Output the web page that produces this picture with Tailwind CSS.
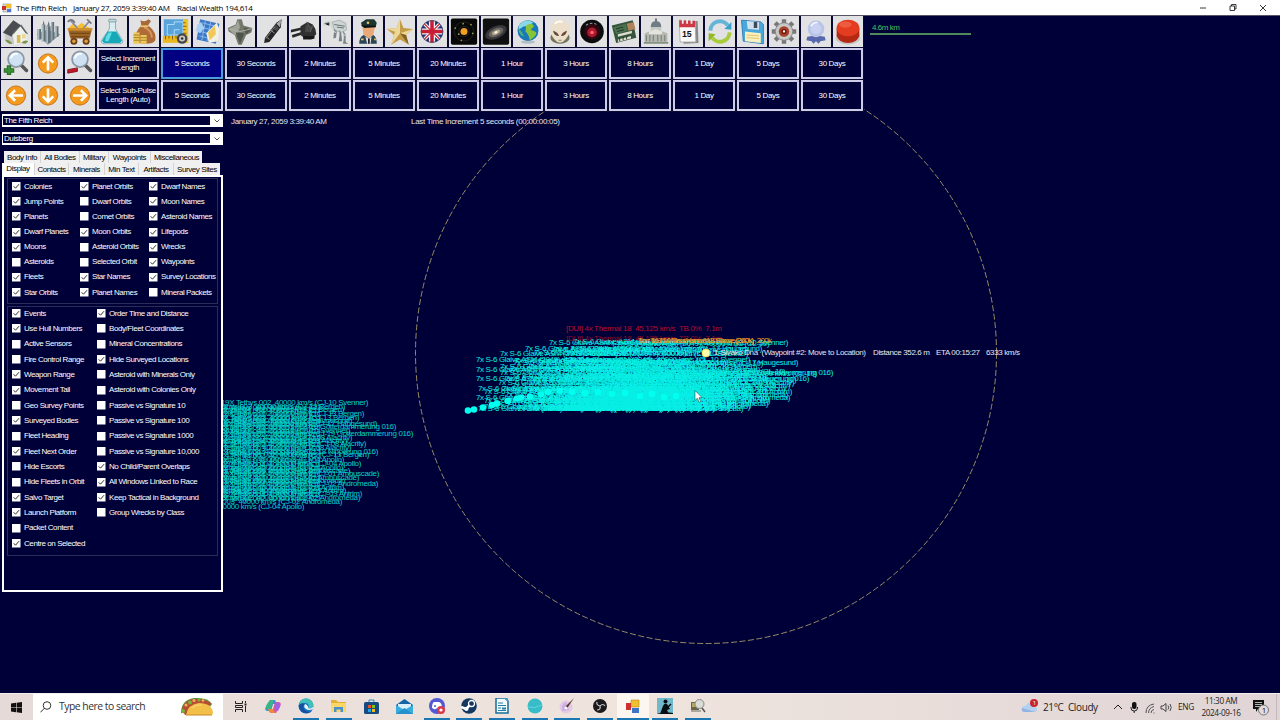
<!DOCTYPE html>
<html lang="en">
<head>
  <meta charset="UTF-8" />
  <meta name="viewport" content="width=device-width, initial-scale=1.0" />
  <title>The Fifth Reich</title>
  <script src="https://cdn.jsdelivr.net/npm/@tailwindcss/browser@4"></script>
</head>
<body class="w-[1280px] h-[720px] overflow-hidden bg-[#000038] font-['Liberation_Sans',sans-serif]">
<div class="relative flex flex-col w-[1280px] h-[720px]">

  <!-- Title bar -->
  <header class="flex items-center h-[16px] shrink-0 bg-white border-b border-[#55556a] pl-[2px] text-[8px] text-black font-['Open_Sans',sans-serif] whitespace-pre">
    <svg class="w-[10px] h-[10px] mr-[4px]" viewBox="0 0 10 10"><rect x="1" y="1" width="8" height="8" fill="#ddd" stroke="#888" stroke-width=".6"/><rect x="4" y="1" width="5" height="4" fill="#f0c030"/><rect x="0" y="3" width="4" height="4" fill="#c8302c"/><rect x="5" y="6" width="4" height="3" fill="#4a7ad0"/></svg>
    <span class="w-[57px] tracking-[-0.25px]">The Fifth Reich</span>
    <span class="w-[104px] tracking-[-0.32px]">January 27, 2059 3:39:40 AM</span>
    <span class="tracking-[-0.28px]">Racial Wealth 194,614</span>
    <svg class="ml-auto w-[80px] h-[14px]" viewBox="0 0 80 14" fill="none" stroke="#222" stroke-width=".9"><path d="M0 7h6M30 5h4.500v4.500H30zM31.500 5V3.500H36V8H34.500M60 4l6 6M66 4l-6 6"/></svg>
  </header>

  <!-- System map -->
  <svg class="absolute left-0 top-[16px]" width="1280" height="677" viewBox="0 16 1280 677" font-family="Liberation Sans, sans-serif" font-size="8">
    <circle cx="706" cy="353" r="290.500" fill="none" stroke="#a89a68" stroke-width=".9" stroke-dasharray="6 2.500"/>
    <g id="tethys" fill="#00d4cc"></g>
    <g id="missiles" fill="#08f0e6"></g>
    <g id="contacts"></g>
    <g id="dots" fill="#00ffee"></g>
    <g id="labels"></g>
    <circle cx="706" cy="353" r="4" fill="#ffffb0" stroke="#e8d040" stroke-width=".8"/>
    <rect x="870" y="33" width="101" height="2" fill="#4f8a5a"/>
    <path d="M695 390.500v10l2.300-2.200 1.800 4 1.600-.7-1.800-3.900h3.200z" fill="#fff" stroke="#222" stroke-width=".5"/>
  </svg>

  <!-- Toolbar -->
  <div class="relative w-[864px] shrink-0 bg-[#0a0a30]">
    <div id="iconbar" class="grid grid-cols-27 h-[32px] *:w-[30px] *:h-[31px] *:ml-px *:bg-[#e2e2e4] *:p-px">
      <svg viewBox="0 0 32 32"><path d="M2 17L12 4l15 12-1 12-13 2-9-6z" fill="#c8c8c8"/><path d="M12 16l8-7 8 9v9l-14 4z" fill="#f0f0ec"/><path d="M1 17L13 3l9 6-9 8-2 5z" fill="#4a4e52"/><path d="M22 8l8 11-3-1-6-8-8 9-1-2z" fill="#606468"/><rect x="17" y="20" width="4" height="9" fill="#d8b850"/><rect x="23" y="19" width="4" height="5" fill="#e8d890"/><path d="M3 25q6 0 9 5-5 1-9-5M22 29q4-4 8-2l-3 3z" fill="#78944c"/></svg>
      <svg viewBox="0 0 32 32"><path d="M3 19l12-5 15 5-14 12z" fill="#8a979c"/><path d="M4 13h4v12H4zM9 8h4v19H9zM14 10h5v19h-5zM20 5h3v20h-3zM24 10h4v12h-4z" fill="#60717a"/><path d="M4 13h2v12H4zM9 8h2v19H9zM14 10h2v19h-2zM20 5h1v20h-1zM24 10h2v12h-2z" fill="#aebdc2"/><path d="M15 10l2-6 1 6M10 8l1-5 1 5" fill="#60717a"/></svg>
      <svg viewBox="0 0 32 32"><path d="M3 12l5-5 5 3 5-4 5 4 5 2z" fill="#f4c02c"/><path d="M5 3l8 9M27 4l-7 8" stroke="#8888a8" stroke-width="2"/><path d="M2 5q5-5 8 1M24 2l5 5" stroke="#777" stroke-width="2" fill="none"/><path d="M2 12h28l-3 12H5z" fill="#9c6424"/><path d="M2 12h28v3H2z" fill="#d09030"/><path d="M5 18h22M6 22h20" stroke="#623c14"/><circle cx="9" cy="27" r="4" fill="#6c4014"/><circle cx="23" cy="27" r="4" fill="#6c4014"/><circle cx="9" cy="27" r="2" fill="#e0a040"/><circle cx="23" cy="27" r="2" fill="#e0a040"/></svg>
      <svg viewBox="0 0 32 32"><path d="M13 3h7v10l8 13q1 4-3 4H7q-4 0-3-4l9-13z" fill="#d8eef0" stroke="#80a8b0"/><path d="M11 16h10l6 10q0 3-3 3H8q-3 0-3-3z" fill="#16a8b8"/><path d="M9 22l3-5h4l-4 10H8z" fill="#60dce4"/><rect x="12" y="2" width="9" height="3" rx="1.500" fill="#c8dce0" stroke="#7898a0"/></svg>
      <svg viewBox="0 0 32 32"><path d="M12 3q5 3 9-1l3 2-4 6h-7z" fill="#a86838"/><path d="M13 9h8q10 8 8 17-2 4-11 4-12 0-12-6 0-8 7-15z" fill="#b06c38"/><path d="M16 11q9 4 9 12" stroke="#d89860" stroke-width="2" fill="none"/><path d="M12 10h9" stroke="#ecc868" stroke-width="2"/><path d="M4 17h7v13H4zM12 20h7v10h-7z" fill="#ecc858"/><path d="M4 20h7M4 23h7M4 26h7M12 23h7M12 26h7" stroke="#a07820"/></svg>
      <svg viewBox="0 0 32 32"><path d="M2 2h27v21H2z" fill="#5aa4dc"/><path d="M6 20V8h8V5h10v15z" fill="none" stroke="#b8e0fa"/><path d="M14 20v-6h6" stroke="#b8e0fa" fill="none"/><path d="M1 21h28v8H1z" fill="#ecb820"/><path d="M24 2h6v27h-6z" fill="#f0c428"/><path d="M4 21v4M8 21v3M12 21v4M16 21v3M24 6h3M24 10h4M24 14h3M24 18h4" stroke="#6c5410"/><circle cx="23" cy="24" r="6" fill="#444"/><circle cx="23" cy="24" r="3.500" fill="#c8c8c8"/><circle cx="23" cy="24" r="1.500" fill="#333"/></svg>
      <svg viewBox="0 0 32 32"><path d="M7 2l22 5-4 23-22-5z" fill="#3c78c8"/><path d="M9 6l16 4M8 11l16 4M7 16l16 4M6 21l16 4M13 4L9 26M19 5l-4 22" stroke="#90bcec"/><path d="M4 8l4-3 4 7-5 6-5-3z" fill="#a8d0f4"/><path d="M14 18L26 6l3 7-2 14-10 2z" fill="#f2f0e4"/><path d="M16 17l8-8 1 10-7 7z" fill="#f0c858"/></svg>
      <svg viewBox="0 0 32 32"><path d="M13 2h5l2 7 10 3-1 5-6 3-5 11h-4l-4-11-7-4-1-4 9-4z" fill="#74786c"/><path d="M14 3l2 8-4 9-3-1-6-6 8-4z" fill="#a0a498"/><path d="M20 11l9 3-6 5zM11 17l10 1-5 12z" fill="#50544c"/><path d="M3 13l13 3 13-3" stroke="#b0b4a8" fill="none"/></svg>
      <svg viewBox="0 0 32 32"><path d="M27 2l-1 9-13 17-6 1 1-6L21 6z" fill="#242424"/><path d="M27 2l-6 5 4 4z" fill="#a8a8a8"/><path d="M20 8l4 4-3 4-4-4z" fill="#484848"/><path d="M9 22l4 3M14 14l5 4" stroke="#a0a0a0"/><path d="M19 11L9 24" stroke="#888"/></svg>
      <svg viewBox="0 0 32 32"><path d="M1 14l13-3v3L1 17zM2 20l13-4v3L3 23z" fill="#282828"/><path d="M12 10l8-5 6 3 3 5 1 6-3 3-10 2-5-4z" fill="#303030"/><path d="M18 8l7 2-1 6-7 1z" fill="#484848"/><path d="M15 21h13v3l-4 1h-9z" fill="#181818"/><path d="M19 5l3 5M26 9l-3 8" stroke="#666"/></svg>
      <svg viewBox="0 0 32 32"><path d="M1 5l7-2 5 2 8-3 7 3 1 8-5 5-12-3-3-6-7 1z" fill="#d4d8d8"/><path d="M12 5l8-2 7 4 1 7-6 3-8-3z" fill="#ccd4d4" stroke="#8c9494" stroke-width=".6"/><path d="M14 13l3 3-1 7-3 1zM24 15l3 4v9l3 2h-6l1-7zM20 14l2 4 1 9h-4l1-7z" fill="#788484"/><path d="M3 7l5-1v3M14 8l12 2M17 11l8 1" stroke="#5c6464"/><path d="M13 16l3 1M24 20h3" stroke="#eee"/></svg>
      <svg viewBox="0 0 32 32"><path d="M9 7h16l-2 8-1 5-5 4-6-4-1-6z" fill="#e8a878"/><path d="M8 6l6-4h9l3 4-1 4H9z" fill="#1e3430"/><path d="M8 9h17v2l-13 1z" fill="#0c1414"/><circle cx="16" cy="6" r="1.500" fill="#e8c860"/><path d="M6 30q0-8 5-10l6 4 5-4q4 2 4 10z" fill="#2a4454"/><path d="M13 22l4 2 3-2-1 8h-4z" fill="#ddd"/><path d="M16 24h2v6h-2z" fill="#222"/><path d="M8 25h3M23 25h2" stroke="#e8c060" stroke-width="2"/></svg>
      <svg viewBox="0 0 32 32"><path d="M16 2l4 10 11 1-8 7 3 11-10-6-10 6 3-11-8-7 11-1z" fill="#c49c48"/><path d="M16 2v16l-10 13 3-11zM16 18L1 13l11-1zM16 18l15-5-8 7z" fill="#ecd898"/><path d="M16 18l10 13-3-11z" fill="#806024"/></svg>
      <svg viewBox="0 0 32 32"><circle cx="16" cy="16" r="12.500" fill="#24346c"/><path d="M7 7l18 18M25 7L7 25" stroke="#f0f0f4" stroke-width="4"/><path d="M16 3.500v25M3.500 16h25" stroke="#f0f0f4" stroke-width="7"/><path d="M7 7l18 18M25 7L7 25" stroke="#c82034" stroke-width="1.500"/><path d="M16 3.500v25M3.500 16h25" stroke="#c81c34" stroke-width="4"/><circle cx="16" cy="16" r="12.500" fill="none" stroke="#40466c"/></svg>
      <svg viewBox="0 0 32 32"><rect x="1" y="1" width="30" height="30" rx="2" fill="#080808"/><g fill="none" stroke="#242420"><circle cx="16" cy="16" r="6"/><circle cx="16" cy="16" r="11"/></g><circle cx="16" cy="16" r="4" fill="#f0a020"/><g fill="#90a050"><circle cx="6" cy="12" r="1"/><circle cx="24" cy="8" r="1"/><circle cx="26" cy="18" r="1"/><circle cx="13" cy="26" r="1"/><circle cx="10" cy="19" r="1"/><circle cx="15" cy="7" r="1"/></g></svg>
      <svg viewBox="0 0 32 32"><rect x="1" y="1" width="30" height="30" rx="2" fill="#101012"/><g transform="rotate(-24 16 17)"><ellipse cx="16" cy="17" rx="13" ry="7" fill="#38383c"/><ellipse cx="16" cy="17" rx="9" ry="4.500" fill="#69655f"/><ellipse cx="16" cy="17" rx="5" ry="2.500" fill="#b0a490"/><ellipse cx="16" cy="17" rx="2" ry="1.300" fill="#fff0d8"/></g></svg>
      <svg viewBox="0 0 32 32"><circle cx="16" cy="15" r="12" fill="#1878b8"/><path d="M8 6q8-5 14 0-7 5-11 4-4 4-6 3 0-4 3-7z" fill="#88d8e8"/><path d="M14 9q6-4 9 1l-4 4 5 2q4 2-2 7l-4 3q-1-7-5-10z" fill="#88c438"/><path d="M5 12q5 5 7 10-7-2-7-10z" fill="#48b084"/><ellipse cx="16" cy="28" rx="8" ry="2" fill="#889cac" opacity=".5"/></svg>
      <svg viewBox="0 0 32 32"><ellipse cx="16" cy="23" rx="11" ry="7" fill="#74745c"/><path d="M5 13q0-11 11-11t11 11q0 8-7 14-4 3-8 0-7-6-7-14z" fill="#ece0cc"/><path d="M8 15q5 1 7 6-6 0-7-6zM24 15q-5 1-7 6 6 0 7-6z" fill="#684c38"/><path d="M10 7q4-4 9-2" stroke="#fff" stroke-width="2" fill="none"/><path d="M14 26h4" stroke="#907860"/></svg>
      <svg viewBox="0 0 32 32"><circle cx="16" cy="16" r="13.500" fill="#0c0c0e"/><circle cx="16" cy="16" r="9" fill="#300810"/><circle cx="16" cy="17" r="5.500" fill="#b01830"/><circle cx="16" cy="17" r="2" fill="#ff6870"/><path d="M9 9q7-5 14 0" stroke="#999" stroke-width="1.200" stroke-dasharray="3 2" fill="none"/></svg>
      <svg viewBox="0 0 32 32"><path d="M2 9l24-6 4 20-23 6z" fill="#34543c"/><path d="M4 11l14-4 2 8-13 4z" fill="#4c7050"/><path d="M19 7l8-2 2 8-8 2z" fill="#b08458"/><path d="M9 19l16-4v3L9 22zM9 25l15-4v3L9 28z" fill="#dcdccc"/><path d="M7 13l8-2M8 16l8-2M11 23v4M15 22v4M19 21v4" stroke="#1c3020"/></svg>
      <svg viewBox="0 0 32 32"><path d="M15 1h2v4h-2z" fill="#666"/><path d="M10 11q0-7 6-7t6 7z" fill="#707c84"/><path d="M10 11h12v5H10z" fill="#c4c8c4"/><path d="M3 18l13-5 13 5v10H3z" fill="#b4b8b0"/><path d="M8 16l8-3 7 3v3H8z" fill="#e4e4dc"/><path d="M5 20v7M9 20v7M13 20v7M18 20v7M22 20v7M26 20v7" stroke="#7c847c" stroke-width="1.300"/><path d="M2 28h28v2H2z" fill="#849080"/></svg>
      <svg viewBox="0 0 32 32"><path d="M8 4h19l1 25-17 1z" fill="#888"/><path d="M6 3l18 1 1 24H7z" fill="#fafafa" stroke="#aaa"/><path d="M6 3l18 1v7H6z" fill="#cc3844"/><path d="M10 2v5M15 2v5M20 2v5" stroke="#eee" stroke-width="2"/><text x="9" y="22" font-family="Liberation Sans, sans-serif" font-weight="bold" font-size="10" fill="#111">15</text></svg>
      <svg viewBox="0 0 32 32" fill="none" stroke-width="4.500"><path d="M5 15A11 11 0 0 1 25 9" stroke="#64b4d8"/><path d="M27 17A11 11 0 0 1 7 23" stroke="#a8cc3c"/><path d="M21 13l8 1V5z" fill="#3ca0cc"/><path d="M11 19l-8-1v9z" fill="#90b824"/></svg>
      <svg viewBox="0 0 32 32"><path d="M4 3l22 2 3 3v22l-23-3z" fill="#48a8dc" stroke="#2878b4"/><path d="M10 4l14 1v9l-13-1z" fill="#d4e0ec"/><path d="M18 5h4v7h-4z" fill="#3c4c5c"/><path d="M8 16l18 2v11L8 27z" fill="#f8f0c0"/><path d="M10 20l14 1M10 23l14 1" stroke="#e0c060"/></svg>
      <svg viewBox="0 0 32 32"><g stroke="#787878" stroke-width="5"><path d="M16 2v28M2 16h28M6 6l20 20M26 6L6 26"/></g><circle cx="16" cy="16" r="10" fill="#c8c8c8" stroke="#848484"/><circle cx="16" cy="16" r="6" fill="#a84028"/><circle cx="16" cy="16" r="3" fill="#6c1810"/><circle cx="16" cy="16" r="1.300" fill="#fff"/></svg>
      <svg viewBox="0 0 32 32"><path d="M6 22l5-1h10l5 1 1 4-6 1-2 3-3-3-3 3-2-3-6-1z" fill="#5868ac"/><circle cx="16" cy="13" r="9.500" fill="#b8c4e8"/><circle cx="16" cy="13" r="6" fill="#c8d2f0"/><path d="M10 10q3-5 8-4" stroke="#eef2ff" stroke-width="2" fill="none"/></svg>
      <svg viewBox="0 0 32 32"><ellipse cx="16" cy="23" rx="14" ry="8" fill="#c8c8c8"/><path d="M3 12v9q3 8 13 8t13-8v-9z" fill="#b42814"/><ellipse cx="16" cy="12" rx="13" ry="9.500" fill="#e43c20"/><ellipse cx="13" cy="8" rx="7" ry="3.500" fill="#ee5c40"/></svg>
    </div>

    <div class="grid grid-cols-[32px_32px_32px_1fr] h-[64px] grid-rows-2">
      <svg class="w-[30px] h-[31px] ml-px p-px bg-[#e2e2e4]" viewBox="0 0 32 32"><path d="M22 18l6 6" stroke="#555" stroke-width="4" stroke-linecap="round"/><circle cx="16" cy="11" r="9" fill="#cfe2f4" stroke="#8c98a8" stroke-width="2"/><path d="M10 10q2-6 8-5" stroke="#fff" stroke-width="2" fill="none"/><path d="M8 18v11M2 24h12" stroke="#286c28" stroke-width="5"/><path d="M8 19v9M3 24h10" stroke="#389034" stroke-width="3"/></svg>
      <svg class="w-[30px] h-[31px] ml-px p-px bg-[#e2e2e4]" viewBox="0 0 32 32"><circle cx="16" cy="16" r="11" fill="#f49a1c" stroke="#c06c10"/><path d="M16 9v15M10 15l6-6 6 6" stroke="#fff" stroke-width="3" fill="none"/></svg>
      <svg class="w-[30px] h-[31px] ml-px p-px bg-[#e2e2e4]" viewBox="0 0 32 32"><path d="M22 18l6 6" stroke="#555" stroke-width="4" stroke-linecap="round"/><circle cx="16" cy="11" r="9" fill="#cfe2f4" stroke="#8c98a8" stroke-width="2"/><path d="M10 10q2-6 8-5" stroke="#fff" stroke-width="2" fill="none"/><path d="M2 23l11-2v4L2 27z" fill="#c01828" stroke="#801020"/></svg>
      <div id="increments" class="grid grid-cols-12"></div>
      <svg class="w-[30px] h-[31px] ml-px p-px bg-[#e2e2e4]" viewBox="0 0 32 32"><circle cx="16" cy="16" r="11" fill="#f49a1c" stroke="#c06c10"/><path d="M9 16h15M15 10l-6 6 6 6" stroke="#fff" stroke-width="3" fill="none"/></svg>
      <svg class="w-[30px] h-[31px] ml-px p-px bg-[#e2e2e4]" viewBox="0 0 32 32"><circle cx="16" cy="16" r="11" fill="#f49a1c" stroke="#c06c10"/><path d="M16 8v15M10 17l6 6 6-6" stroke="#fff" stroke-width="3" fill="none"/></svg>
      <svg class="w-[30px] h-[31px] ml-px p-px bg-[#e2e2e4]" viewBox="0 0 32 32"><circle cx="16" cy="16" r="11" fill="#f49a1c" stroke="#c06c10"/><path d="M8 16h15M17 10l6 6-6 6" stroke="#fff" stroke-width="3" fill="none"/></svg>
      <div id="subpulses" class="grid grid-cols-12"></div>
    </div>
  </div>

  <!-- Side panel -->
  <aside class="relative w-[223px] pl-[2px] pt-[2px] text-[8px] tracking-[-0.42px] text-white whitespace-nowrap">
    <div class="flex items-center justify-between h-[13px] bg-white pr-[3px]">
      <div class="w-[207px] h-[9px] bg-[#000038] leading-[9px] pl-px ml-px">The Fifth Reich</div>
      <svg class="w-[6px] h-[4px]" viewBox="0 0 6 4" fill="none" stroke="#444" stroke-width=".9"><path d="M.5.5L3 3 5.500.5"/></svg>
    </div>
    <div class="flex items-center justify-between h-[13px] mt-[5px] bg-white pr-[3px]">
      <div class="w-[207px] h-[9px] bg-[#000038] leading-[9px] pl-px ml-px">Duisberg</div>
      <svg class="w-[6px] h-[4px]" viewBox="0 0 6 4" fill="none" stroke="#444" stroke-width=".9"><path d="M.5.5L3 3 5.500.5"/></svg>
    </div>

    <div class="flex mt-[6px] ml-[2px] h-[12px] w-[198px] bg-[#f0f0f0] text-black leading-[13px] text-center divide-x divide-[#d4d4d4]">
      <span class="w-[37px]">Body Info</span><span class="w-[39px]">All Bodies</span><span class="w-[29px]">Military</span><span class="w-[42px]">Waypoints</span><span class="w-[51px]">Miscellaneous</span>
    </div>
    <div class="flex h-[12px] w-[218px] bg-[#f0f0f0] text-black leading-[13px] text-center divide-x divide-[#d4d4d4]">
      <span class="w-[33px] bg-white leading-[11px]">Display</span><span class="w-[34px]">Contacts</span><span class="w-[36px]">Minerals</span><span class="w-[34px]">Min Text</span><span class="w-[35px]">Artifacts</span><span class="w-[46px]">Survey Sites</span>
    </div>

    <div class="w-[221px] h-[417px] bg-[#000038] border-2 border-white px-[3px] pt-px">
      <div class="grid grid-cols-[68px_69px_1fr] grid-flow-col grid-rows-8 h-[126px] border border-[#2c2c58] pl-[4px] pb-[3px]" id="display"></div>
      <div class="flex h-[250px] mt-[2px] border border-[#2c2c58] pl-[4px]">
        <div id="options" class="w-[85px] -mt-px"></div>
        <div id="options2" class="-mt-px"></div>
      </div>
    </div>
  </aside>

  <!-- Taskbar -->
  <footer class="absolute left-0 bottom-0 flex items-center w-[1280px] h-[27px] bg-linear-to-r from-[#e6dad8] via-[#efe5dd] to-[#e0d4d6] border-t border-[#f6eeee] font-['Open_Sans',sans-serif] text-[#222] whitespace-nowrap">
    <div class="w-[33px] flex justify-center"><svg class="size-[11px]" viewBox="0 0 11 11" fill="#111"><path d="M0 1.500L5 .8v4.400H0zM5.600.7L11 0v5.200H5.600zM0 5.800h5v4.400l-5-.7zM5.600 5.800H11V11l-5.400-.7z"/></svg></div>
    <div class="flex items-center w-[190px] h-full bg-white pl-[7px]">
      <svg class="size-[12px] mr-[7px]" viewBox="0 0 12 12" fill="none" stroke="#333"><circle cx="7" cy="4.500" r="3.800"/><path d="M4.300 7.300L.5 11.300"/></svg>
      <span class="text-[10.4px] tracking-[-0.5px] text-[#333]">Type here to search</span>
      <svg class="ml-auto mr-[9px] w-[34px] h-[20px]" viewBox="0 0 34 20"><path d="M1 16Q1 3 14 1q14-1 18 6l-8 11z" fill="#5c9434"/><path d="M2 12l3-6 4-3 5-1 6 0 7 2 5 3-8 3-10 7-9 1z" fill="#b84c34"/><g fill="#f0b45c"><circle cx="6" cy="8" r="1.500"/><circle cx="14" cy="3.500" r="1.500"/><circle cx="23" cy="3.500" r="1.300"/></g><g fill="#78b43c"><circle cx="10" cy="5.500" r="2"/><circle cx="19" cy="3" r="1.600"/><circle cx="3" cy="14" r="2"/></g><path d="M6 18Q8 7 19 6q13 0 14 10 0 2-3 2z" fill="#f2c048"/><path d="M6 18h26" stroke="#c88828"/><path d="M12 11q4-4 10-3" stroke="#fadc84" fill="none"/></svg>
    </div>
    <div class="flex h-full ml-[1.500px] *:flex *:w-[26px] *:mx-[3.330px] *:h-full *:items-center *:justify-center *:border-b-2 *:border-transparent">
      <div><svg class="w-[12px] h-[11px]" viewBox="0 0 12 11" fill="none" stroke="#222"><path d="M.5 0v2.500h7V0M.5 11V8.500h7V11M.5 4.500h7v2h-7zM10.500 0v2M10.500 5v6"/><path d="M9.500 3.500h2" stroke-width="2"/></svg></div>
      <div><svg class="w-[16px] h-[15px]" viewBox="0 0 16 15"><path d="M5 1h5l2 4H8L6 12H2Q-1 11 1 8z" fill="#3090e0"/><path d="M5 1h4L6 10H1Q0 9 2 5z" fill="#38b488"/><path d="M11 14H6l-2-4h4l2-7h4q3 1 1 4z" fill="#d858a0"/><path d="M10 4h4q2 1 1 4l-2 4-3-1z" fill="#a060e8"/><path d="M3 10h5l2 4H6q-2 0-3-4z" fill="#f08838"/></svg></div>
      <div class="border-[#1b76b4]!"><svg class="size-[16px]" viewBox="0 0 16 16"><circle cx="8" cy="8" r="7.500" fill="#1678c8"/><path d="M1 7Q2 0 8.500.5 15 1 15.500 8q-1 3-5 2.500Q12 5 7 5 3 5 1 7z" fill="#40c0b8"/><path d="M1 7q3-3 6-1-3 2-1 5 3 4 8 2Q10 17 4 14 0 11 1 7z" fill="#1450a0"/><path d="M7 6q-2 3 1 5 3 2 7 0l.5-3q-1 3-5 2.500 0-3-3.500-4.500z" fill="#eaf2f4"/></svg></div>
      <div class="border-[#1b76b4]!"><svg class="w-[15px] h-[14px]" viewBox="0 0 15 14"><path d="M0 1h5l2 2h8v10H0z" fill="#e8b030"/><path d="M0 4h15v9H0z" fill="#fad868"/><path d="M3 13V8h9v5h-2.500v-2.500h-4V13z" fill="#4890d0"/></svg></div>
      <div><svg class="size-[15px]" viewBox="0 0 15 15"><path d="M5 4V1h5v3" stroke="#2888c8" fill="none"/><rect x="0" y="3" width="15" height="12" rx="1.500" fill="#184c80"/><path d="M4 6h3v3H4z" fill="#f05028"/><path d="M8 6h3v3H8z" fill="#80c020"/><path d="M4 10h3v3H4z" fill="#20a8e8"/><path d="M8 10h3v3H8z" fill="#f8b818"/></svg></div>
      <div><svg class="w-[17px] h-[15px]" viewBox="0 0 17 15"><path d="M0 6l8.500-6L17 6v9H0z" fill="#1464a8"/><path d="M2 5h13v6H2z" fill="#d8eefa"/><path d="M0 6l8.500 5L17 6v9H0z" fill="#38acdc"/><path d="M0 15l8.500-6L17 15z" fill="#2490cc"/></svg></div>
      <div class="border-[#1b76b4]!"><svg class="size-[16px]" viewBox="0 0 16 16"><circle cx="8" cy="8" r="8" fill="#5058d4"/><path d="M3 10q0-5 2-6h5q3 1 3 6l-3 1.500-1-1H7l-1 1z" fill="#fff"/><circle cx="6" cy="8" r="1" fill="#5058d4"/><circle cx="12" cy="12" r="4" fill="#d83848"/><circle cx="12" cy="12" r="1.600" fill="#fff"/></svg></div>
      <div class="border-[#1b76b4]!"><svg class="size-[16px]" viewBox="0 0 16 16"><circle cx="8" cy="8" r="7.800" fill="#143860"/><path d="M0 9l5 2 5-5" stroke="#fff" stroke-width="2.500" fill="none"/><circle cx="10.500" cy="5.500" r="3" fill="#143860" stroke="#fff" stroke-width="1.300"/><circle cx="5.500" cy="11" r="2" fill="#fff"/></svg></div>
      <div class="border-[#1b76b4]!"><svg class="w-[14px] h-[16px]" viewBox="0 0 14 16"><path d="M1 0h9l3 3v12H1z" fill="#f2fafc" stroke="#186c98" stroke-width="1.500"/><path d="M9 0l4 4V0z" fill="#40a0c8"/><path d="M3 5h5M3 7.500h8M3 10h3M3 12.500h8" stroke="#207ca8"/><path d="M7 9.500h4v2H7z" fill="#207ca8"/></svg></div>
      <div class="border-[#1b76b4]!"><svg class="size-[16px]" viewBox="0 0 16 16"><circle cx="8" cy="8" r="7.500" fill="#38bcc8"/><path d="M1 9q7 2 14-2" stroke="#60d4dc" fill="none"/></svg></div>
      <div class="border-[#1b76b4]!"><svg class="size-[16px]" viewBox="0 0 16 16"><circle cx="7" cy="9" r="6.500" fill="#e4c8e4"/><path d="M3 13q-1-7 4-9l3 8z" fill="#c8b0e4"/><path d="M15 0L9 9l-3 3 1-4z" fill="#5c3828"/><circle cx="7" cy="10" r="1.500" fill="#fff"/></svg></div>
      <div class="border-[#1b76b4]!"><svg class="size-[14px]" viewBox="0 0 14 14"><circle cx="7" cy="7" r="7" fill="#1c1a1c"/><path d="M7 7Q3 6 4 3M7 7q3-3 5 0M7 7q1 4-3 4" stroke="#ccc" stroke-width="1.200" fill="none"/></svg></div>
      <div class="border-[#1b76b4]! bg-[#fbf6f0] w-[32px]! mx-[0.330px]!"><svg class="size-[15px]" viewBox="0 0 15 15"><path d="M6 1h8v7H6z" fill="#f0c030" stroke="#b88818" stroke-width=".6"/><path d="M1 4h5v7H1z" fill="#cc3030"/><path d="M7 9h7v5H7z" fill="#3c74c8"/></svg></div>
      <div class="border-[#1b76b4]!"><svg class="size-[16px]" viewBox="0 0 16 16"><rect width="16" height="16" fill="#70b8cc"/><path d="M0 16q7-3 16-1v1zM3 16l3-8q1-3 4-2l3 5-3 1 2 4z" fill="#080c10"/><path d="M11 9l3-3" stroke="#080c10" stroke-width="1.500"/><circle cx="8.500" cy="3.500" r="2" fill="#080c10"/></svg></div>
      <div class="border-[#1b76b4]!"><svg class="size-[16px]" viewBox="0 0 16 16"><path d="M1 4h8v8H1z" fill="#6c6448"/><path d="M2 5h5v4H2z" fill="#b8a860"/><circle cx="9.500" cy="6" r="4.500" fill="#d8dcd4" stroke="#888"/><path d="M12 10l3 4" stroke="#555" stroke-width="1.500"/><path d="M1 13h10" stroke="#a8a8a0" stroke-width="2"/></svg></div>
    </div>

    <svg class="absolute left-[1021px] top-[5px] w-[18px] h-[14px]" viewBox="0 0 18 14"><path d="M3 13Q0 12 1 9t4-2q1-4 5-3 3 1 3 4 4 0 3 4l-2 1z" fill="#b4d0f0"/><path d="M3 13Q0 12 1 9l13 4z" fill="#90b4e4"/><circle cx="13" cy="4" r="4" fill="#c82430"/><text x="11.800" y="6.300" font-size="6" fill="#fff">1</text></svg>
    <span class="absolute left-[1043px] text-[10px] tracking-[-0.38px] whitespace-pre">21°C  Cloudy</span>
    <svg class="absolute left-[1113px] w-[62px] h-[13px]" viewBox="0 0 62 13" fill="none" stroke="#222"><path d="M1 8l4-4 4 4"/><rect x="19" y="1" width="4.500" height="7" rx="2" fill="#111" stroke="none"/><path d="M18 6v1q0 3 3.200 3T24.500 7V6M21.200 10v2"/><path d="M33 12q0-8 8-9M35.500 12q0-5 5.500-6.500M38 12q0-3 3-3.500M40.500 12h1" stroke="#555"/><path d="M48 5h2l3-2.500v8L50 8h-2zM55 4.500q1.500 2 0 4M57 3q2.500 3.500 0 7" stroke-width=".8"/></svg>
    <span class="absolute left-[1178px] text-[8.300px] tracking-[-0.3px]">ENG</span>
    <div class="absolute left-[1198px] w-[46px] text-center text-[8.200px] leading-[12px] tracking-[-0.35px]">11:30 AM<br>2024-09-16</div>
    <svg class="absolute left-[1252px] w-[18px] h-[18px]" viewBox="0 0 18 18"><path d="M1 2h11v9H6l-2 3v-3H1z" fill="#111"/><path d="M3 4.500h7M3 6.500h7M3 8.500h5" stroke="#ddd" stroke-width=".8"/><circle cx="11.500" cy="12" r="5" fill="#e4dadb" stroke="#777"/><text x="9.800" y="15" font-size="8" fill="#111">1</text></svg>
    <i class="absolute left-[1276px] h-full w-px bg-[#c4b8ba]"></i>
  </footer>
</div>

<script>
  const times = ["5 Seconds", "30 Seconds", "2 Minutes", "5 Minutes", "20 Minutes", "1 Hour", "3 Hours", "8 Hours", "1 Day", "5 Days", "30 Days"];
  function timeRow(id, title, active) {
    document.getElementById(id).innerHTML = [title, ...times].map((t, i) =>
      `<button class="w-[62px] h-[31px] pb-px ml-px border-2 text-white text-[8px] tracking-[-0.35px] leading-[9px] ${i === active ? "border-[#4c9ce0] bg-[#000080]" : "border-[#ccccea] bg-[#000038]"}">${t}</button>`).join("");
  }
  timeRow("increments", "Select Increment<br>Length", 1);
  timeRow("subpulses", "Select Sub-Pulse<br>Length (Auto)", -1);

  // a leading + marks a ticked box
  function checks(id, items) {
    document.getElementById(id).innerHTML = items.map(s => {
      const on = s[0] === "+";
      return `<label class="flex items-center h-[15.34px]"><svg class="size-[9px] mr-[3px] shrink-0" viewBox="0 0 9 9"><rect width="8.500" height="8.500" fill="#fff"/>${on ? '<path d="M1.700 4.300l1.800 1.900 3.500-4" fill="none" stroke="#333" stroke-width="1"/>' : ""}</svg>${on ? s.slice(1) : s}</label>`;
    }).join("");
  }
  checks("display", ["+Colonies", "+Jump Points", "+Planets", "+Dwarf Planets", "+Moons", "Asteroids", "+Fleets", "+Star Orbits",
    "+Planet Orbits", "Dwarf Orbits", "Comet Orbits", "+Moon Orbits", "Asteroid Orbits", "Selected Orbit", "+Star Names", "+Planet Names",
    "+Dwarf Names", "+Moon Names", "+Asteroid Names", "+Lifepods", "+Wrecks", "+Waypoints", "+Survey Locations", "Mineral Packets"]);
  checks("options", ["+Events", "+Use Hull Numbers", "Active Sensors", "Fire Control Range", "+Weapon Range", "+Movement Tail", "Geo Survey Points", "+Surveyed Bodies",
    "Fleet Heading", "+Fleet Next Order", "Hide Escorts", "Hide Fleets in Orbit", "+Salvo Target", "+Launch Platform", "Packet Content", "+Centre on Selected"]);
  checks("options2", ["+Order Time and Distance", "Body/Fleet Coordinates", "Mineral Concentrations", "+Hide Surveyed Locations", "Asteroid with Minerals Only", "Asteroid with Colonies Only",
    "Passive vs Signature 10", "Passive vs Signature 100", "Passive vs Signature 1000", "Passive vs Signature 10,000", "+No Child/Parent Overlaps", "+All Windows Linked to Race", "+Keep Tactical in Background", "Group Wrecks by Class"]);

  const put = (id, html) => document.getElementById(id).insertAdjacentHTML("beforeend", html);
  const start = (x, y, t) => `<text x="${x}" y="${y + 3}" xml:space="preserve" letter-spacing="-.35">${t}</text>`;
  const end = (x, y, t) => `<text x="${x}" y="${y + 3}" text-anchor="end" xml:space="preserve" letter-spacing="-.35">${t}</text>`;
  const fit = (x, y, w, fill, t) => `<text x="${x}" y="${y + 3}" textLength="${w}" fill="${fill}" xml:space="preserve">${t}</text>`;

  // Tethys salvos
  [[402, 368, "CJ-10 Svenner"], [406, 345, "CJ-13 Bergen"], [409, 344, "CJ-13 Bergen"], [413, 364, "CJ-13 Bergen"], [417, 359, "CJ-13 Bergen"], [420, 352, "CJ-17 Haugesund"], [423, 377, "CJ-17 Haugesund"],
   [426, 396, "CJ-19 Gotterdammerung 016"], [430, 350, "CJ-10 Svenner"], [433, 413, "CJ-19 Gotterdammerung 016"], [437, 352, "CJ-08 Alacrity"], [440, 347, "CJ-08 Alacrity"], [443, 366, "CJ-08 Alacrity"], [447, 351, "CJ-08 Alacrity"],
   [451, 378, "CJ-18 Nipperung 016"], [454, 369, "CJ-13 Bergen"], [459, 344, "CJ-04 Apollo"], [463, 361, "CJ-04 Apollo"], [467, 343, "CJ-04 Apollo"], [470, 350, "CJ-01 Ambuscade"], [473, 379, "CJ-01 Ambuscade"],
   [477, 359, "CJ-01 Ambuscade"], [480, 345, "CJ-02 Andromeda"], [483, 378, "CJ-02 Andromeda"], [487, 344, "CJ-03 Antrim"], [490, 346, "CJ-03 Antrim"], [493, 362, "CJ-03 Antrim"], [497, 360, "CJ-02 Andromeda"],
   [501, 342, "CJ-02 Andromeda"], [506, 304, "CJ-04 Apollo"]].forEach(([y, x, n], i) => {
    put("tethys", end(x, y, `19X Tethys 00${i % 3 + 2}  40000 km/s (${n})`));
    if (i && y < 500) put("tethys", start(219, y + 1, `0X Tethys 00${i % 3 + 2}  40000 km/s (CJ`));
  });

  // Glaive salvos: y, left edge, right edge, launching ship
  const glaive = [[342, 549, 788, "CL-10 Svenner"], [348, 525, 762, "CL-17 Haugesund"], [353, 500, 748, "CL-10 Svenner"], [359, 476, 750, "CL-10 Svenner"], [362, 513, 798, "CL-17 Haugesund"], [366, 500, 757, "CL-13 Bergen"],
    [369, 476, 760, "CL-13 Bergen"], [372, 500, 833, "CL-19 Gotterdammerung 016"], [375, 512, 766, "CL-13 Bergen"], [378, 476, 809, "CL-18 Nipperung 016"], [382, 498, 794, "CL-08 Alacrity"], [385, 512, 790, "CL-08 Alacrity"],
    [388, 478, 785, "CL-05 Ambition"], [391, 484, 792, "CL-03 Antrim"], [394, 505, 788, "CL-02 Andromeda"], [397, 476, 790, "CL-02 Andromeda"], [400, 484, 770, "CL-04 Apollo"], [403, 495, 768, "CL-02 Andromeda"], [406, 484, 750, "CL-04 Apollo"], [408, 478, 743, "CL-02 Andromeda"]];
  glaive.forEach(([y, l, r, n], i) => {
    put("missiles", start(l, y, "7x S-6 Glaive ASM (2049)  40000 km/s"));
    put("missiles", end(r, y, `7x S-6 Glaive ASM (2049)  40000 km/s (${n})`));
    for (let x = l + 24 + i % 4 * 5; x < r - 165; x += Math.max(15, 44 - i * 1.800)) {
      put("missiles", start(x, y + Math.round(x) % 3 - 1, "7x S-6 Glaive ASM (2049)  40000 km/s (CL-10)"));
    }
  });
  [[468, 410.500], [474, 409.500], [483, 407.500], [492, 405], [497, 403.500], [508, 401], [517, 398.500], [521, 397.500], [530, 396.500], [541, 394.500], [548, 392], [560, 391], [572, 392], [585, 393], [598, 392], [612, 394], [625, 393], [640, 396], [652, 394], [664, 397], [676, 396]]
    .forEach(([x, y]) => put("dots", `<circle cx="${x}" cy="${y}" r="3.300"/>`));

  put("contacts", fit(566, 338, 156, "#8c0c28", "[DUI] 4x Thermal 18  45,125 km/s  TB 0%  7.1m"));
  put("labels", fit(566, 328, 156, "#b80c2c", "[DUI] 4x Thermal 18  45,125 km/s  TB 0%  7.1m")
    + fit(638, 340, 134, "#f0a828", "Torr 16714 Neumann 018 Soroe (260k)  200k")
    + fit(650, 340, 104, "#e08c20", "Tour 10 Thor Hansen 10 Soroe (240k)")
    + fit(714, 352, 152, "#e8e8e8", "1-Sivako Dna  (Waypoint #2: Move to Location)")
    + fit(873, 352, 57, "#e8e8e8", "Distance 352.6 m") + fit(936, 352, 44, "#e8e8e8", "ETA 00:15:27") + fit(986, 352, 34, "#e8e8e8", "6333 km/s")
    + fit(872, 27, 28, "#48c060", "4.6m km")
    + fit(231, 121, 96, "#e8e8e8", "January 27, 2059 3:39:40 AM")
    + fit(411, 121, 149, "#e8e8e8", "Last Time Increment 5 seconds (00:00:00:05)"));
</script>
</body>
</html>
